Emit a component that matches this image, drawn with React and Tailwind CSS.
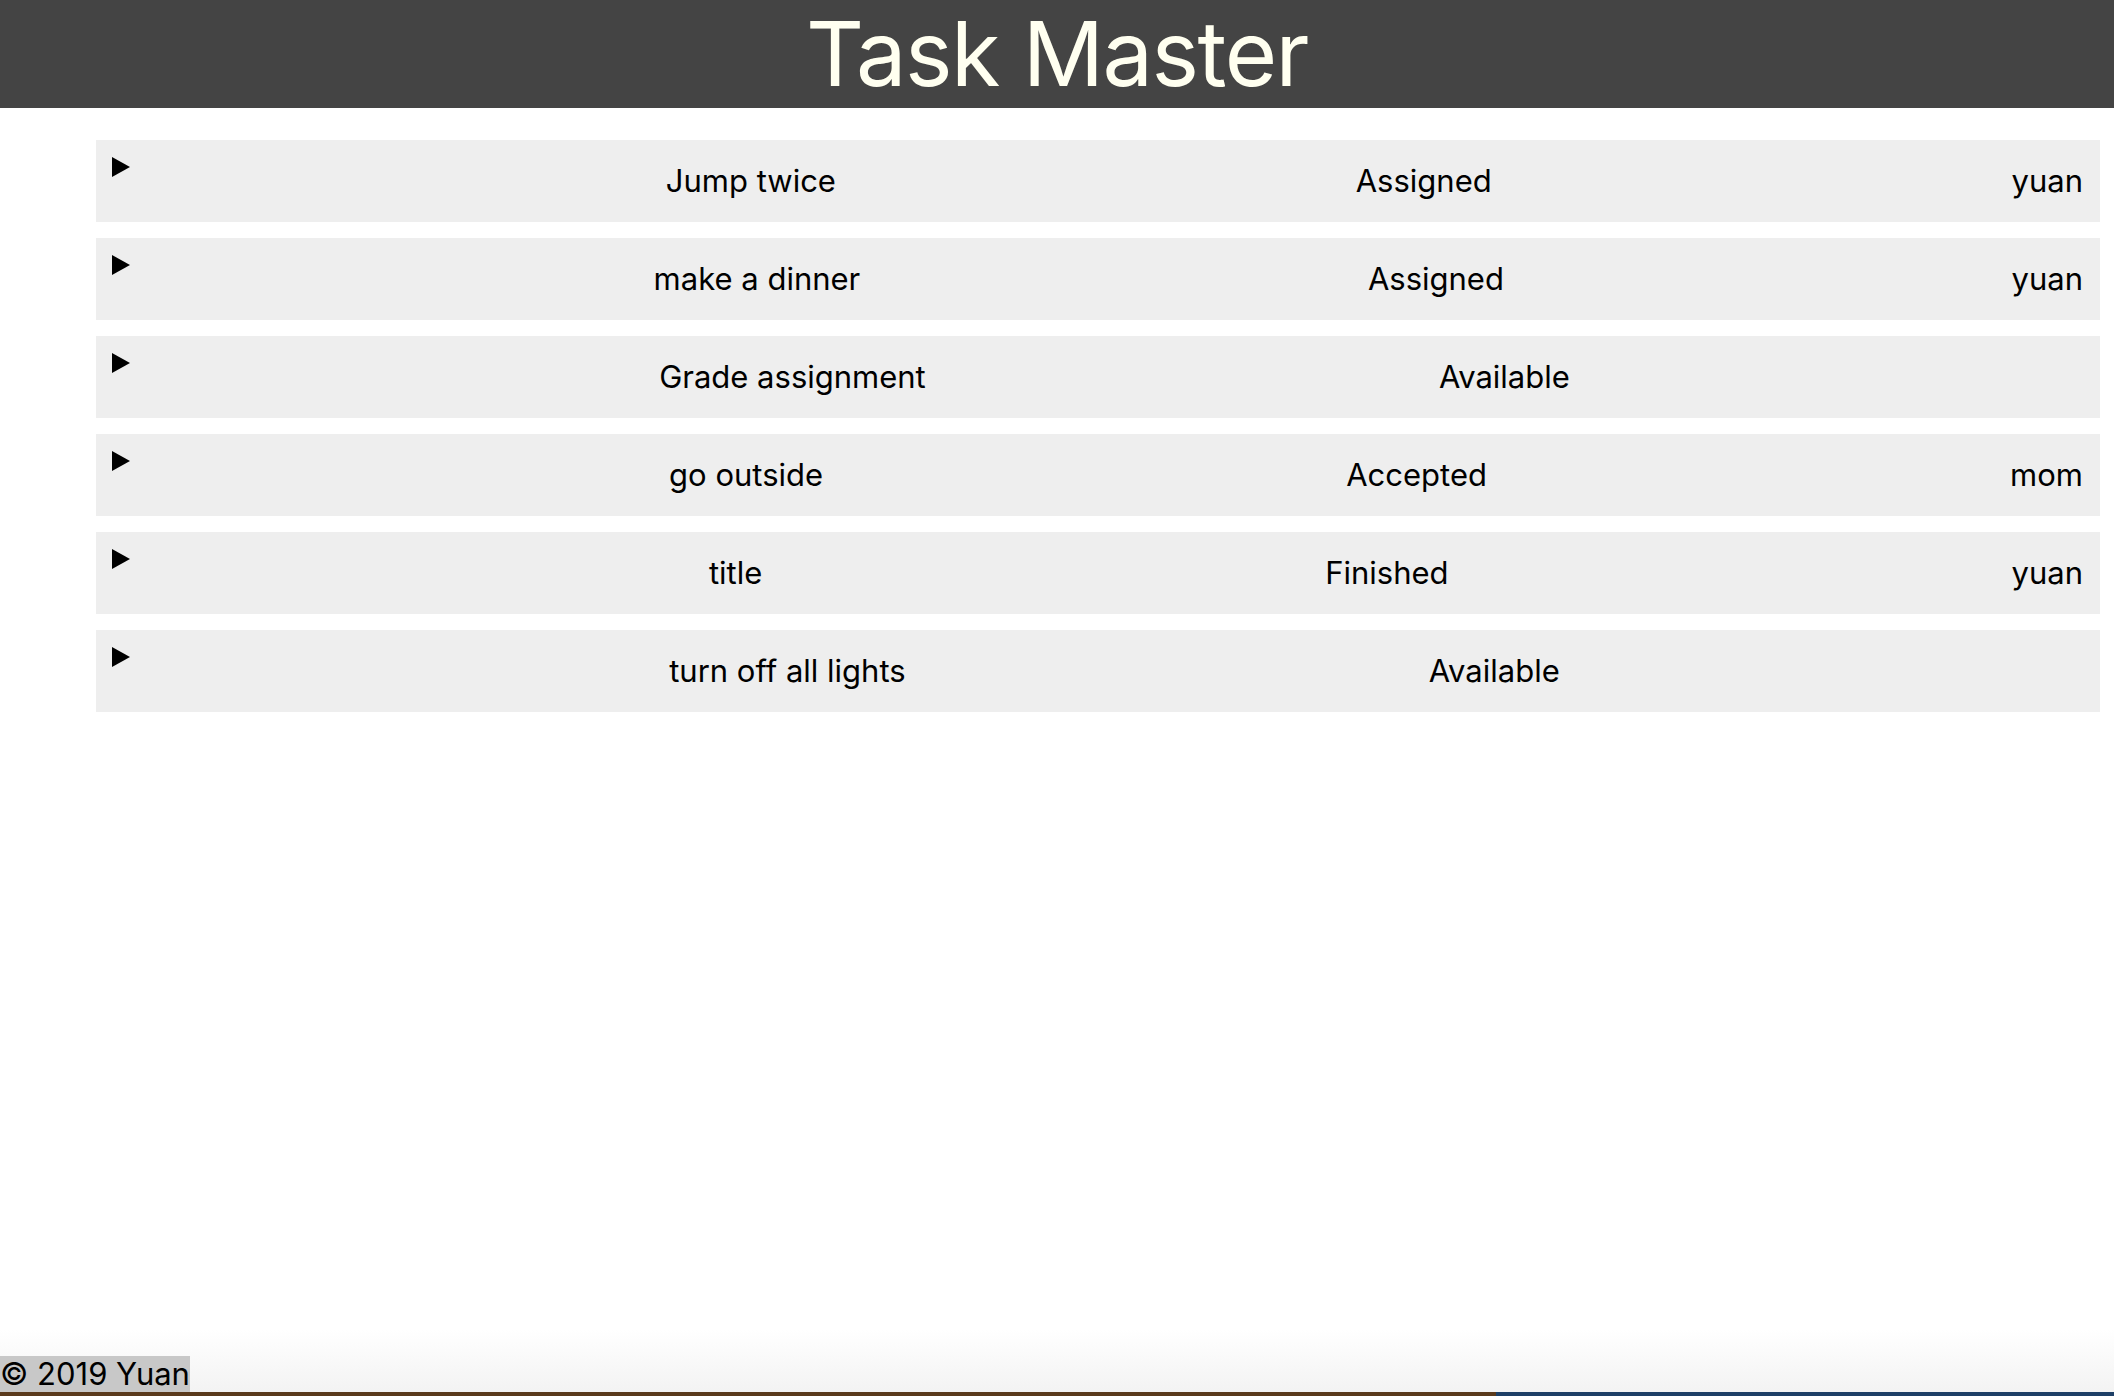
import React from 'react'

const tasks = [
	{ title: 'Jump twice', status: 'Assigned', assignee: 'yuan' },
	{ title: 'make a dinner', status: 'Assigned', assignee: 'yuan' },
	{ title: 'Grade assignment', status: 'Available', assignee: '' },
	{ title: 'go outside', status: 'Accepted', assignee: 'mom' },
	{ title: 'title', status: 'Finished', assignee: 'yuan' },
	{ title: 'turn off all lights', status: 'Available', assignee: '' },
]

function TaskRow({ task }) {
	return (
		<div className="flex h-[82px] bg-[#eeeeee] ml-[96px] mr-[14px] pl-[16px] pr-[17px]">
			<svg width="18" height="20" viewBox="0 0 18 20" className="mt-[17px] shrink-0">
				<polygon points="0,0 18,10 0,20" fill="#000" />
			</svg>
			<div className="flex flex-1 items-center justify-between ml-[16px] text-[31px] text-black">
				<span></span>
				<span>{task.title}</span>
				<span>{task.status}</span>
				<span>{task.assignee}</span>
			</div>
		</div>
	)
}

export default function App() {
	return (
		<div className="flex flex-col h-[1396px] bg-white font-['Inter','Noto_Sans',sans-serif]">
			<div className="flex h-[108px] items-center justify-center bg-[#444444]">
				<h1 className="text-[90px] leading-[100px] tracking-[-1.5px] text-[#fffff0]">Task Master</h1>
			</div>

			<div className="flex flex-col gap-[16px] pt-[32px]">
				{tasks.map((t, i) => (
					<TaskRow key={i} task={t} />
				))}
			</div>

			<div className="flex-1"></div>

			<div className="flex h-[62px] items-end bg-gradient-to-b from-white to-[#f3f3f3]">
				<p className="bg-[#c8c8c8] h-[36px] text-[31px] leading-[36px] text-black">© 2019 Yuan</p>
			</div>
			<div className="flex h-[4px]">
				<div className="w-[1496px] bg-[#5a3a1c]"></div>
				<div className="flex-1 bg-[#1d3f66]"></div>
			</div>
		</div>
	)
}
